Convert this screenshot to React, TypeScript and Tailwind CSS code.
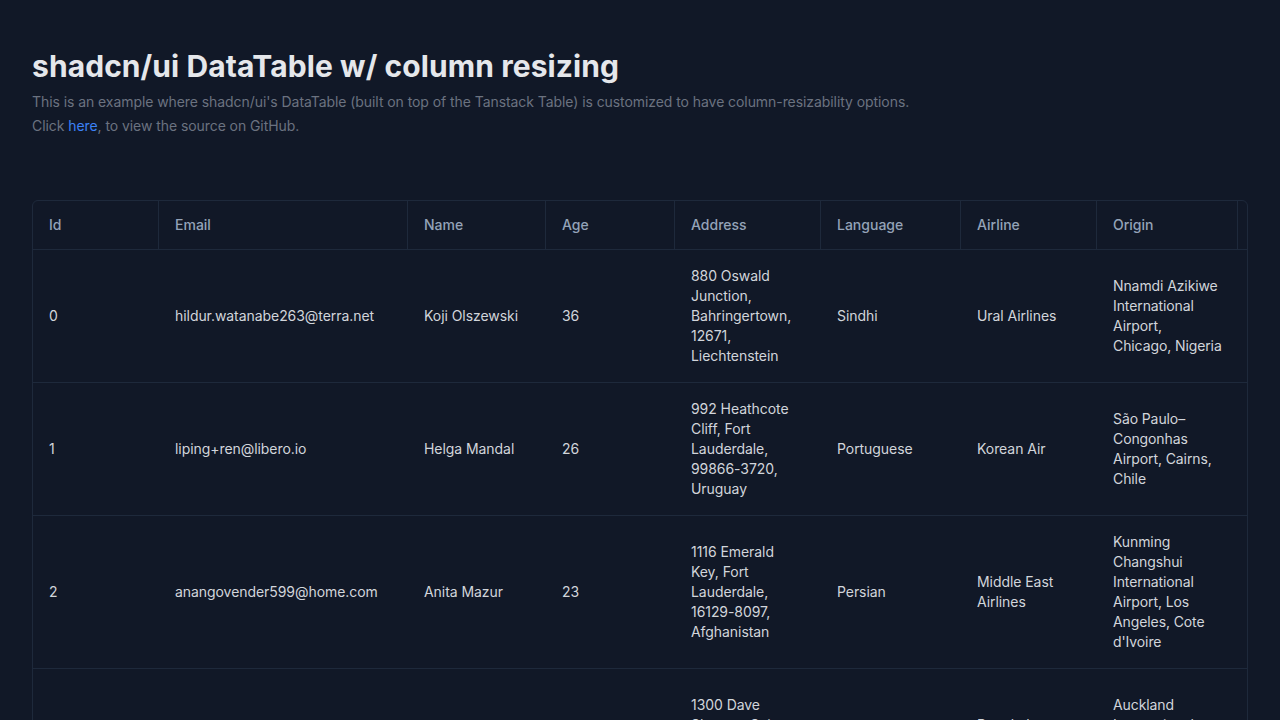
import React from 'react';

const COLUMNS = [
  { label: 'Id', width: 'w-[126px]' },
  { label: 'Email', width: 'w-[249px]' },
  { label: 'Name', width: 'w-[138px]' },
  { label: 'Age', width: 'w-[129px]' },
  { label: 'Address', width: 'w-[146px]' },
  { label: 'Language', width: 'w-[140px]' },
  { label: 'Airline', width: 'w-[136px]' },
  { label: 'Origin', width: 'w-[141px]' },
];

const ROWS = [
  ['0', 'hildur.watanabe263@terra.net', 'Koji Olszewski', '36', '880 Oswald Junction, Bahringertown, 12671, Liechtenstein', 'Sindhi', 'Ural Airlines', 'Nnamdi Azikiwe International Airport, Chicago, Nigeria'],
  ['1', 'liping+ren@libero.io', 'Helga Mandal', '26', '992 Heathcote Cliff, Fort Lauderdale, 99866-3720, Uruguay', 'Portuguese', 'Korean Air', 'São Paulo–Congonhas Airport, Cairns, Chile'],
  ['2', 'anangovender599@home.com', 'Anita Mazur', '23', '1116 Emerald Key,\u00a0Fort Lauderdale, 16129-8097, Afghanistan', 'Persian', 'Middle East Airlines', "Kunming Changshui International Airport, Los Angeles, Cote d'Ivoire"],
  ['3', '', '', '', '1300 Dave Skyway, Cairns, 40127-8812, Norway', '', 'Bangkok Airways', 'Auckland International Airport, Oslo, Peru'],
];

export default function App() {
  return (
    <div className="h-screen overflow-hidden bg-[#111827] px-8 pt-12 font-['Inter',sans-serif]">
      <h1 className="text-3xl font-bold tracking-[0.08px] text-[#e5e7eb]">shadcn/ui DataTable w/ column resizing</h1>
      <p className="mt-1.5 text-sm leading-6 tracking-[-0.07px] text-[#6b7280]">
        This is an example where shadcn/ui's DataTable (built on top of the Tanstack Table) is customized to have column-resizability options.
        <br />
        Click <a className="text-[#3b82f6]">here</a>, to view the source on GitHub.
      </p>
      <div className="mt-[62px] overflow-hidden rounded-md border border-[#1e293b]">
        <table className="w-[1365px] table-fixed border-separate border-spacing-0 text-sm">
          <thead>
            <tr>
              {COLUMNS.map((col) => (
                <th
                  key={col.label}
                  className={`${col.width} h-[49px] border-r border-b border-[#1e293b] px-4 text-left font-medium text-[#94a3b8]`}
                >
                  {col.label}
                </th>
              ))}
              <th className="border-b border-[#1e293b]" />
            </tr>
          </thead>
          <tbody>
            {ROWS.map((row) => (
              <tr key={row[0]}>
                {row.map((cell, i) => (
                  <td
                    key={i}
                    className={`h-[133px] border-b border-[#1e293b] p-4 align-middle text-[#d1d5db] ${i === 7 ? 'tracking-[-0.1px]' : 'tracking-[-0.06px]'}`}
                  >
                    {cell}
                  </td>
                ))}
                <td className="border-b border-[#1e293b]" />
              </tr>
            ))}
          </tbody>
        </table>
      </div>
    </div>
  );
}
